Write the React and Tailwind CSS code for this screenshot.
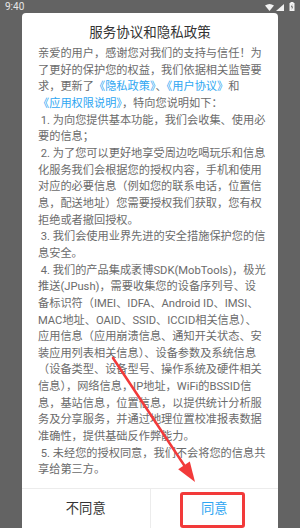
import React from "react";

const B = ({ children }) => <span className="text-[#2ea6f2]">{children}</span>;

const lines = [
  "亲爱的用户，感谢您对我们的支持与信任！为",
  "了更好的保护您的权益，我们依据相关监管要",
  <>求，更新了<B>《隐私政策》</B>、<B>《用户协议》</B>和</>,
  <><B>《应用权限说明》</B>，特向您说明如下：</>,
  " 1. 为向您提供基本功能，我们会收集、使用必",
  "要的信息；",
  " 2. 为了您可以更好地享受周边吃喝玩乐和信息",
  "化服务我们会根据您的授权内容，手机和使用",
  "对应的必要信息（例如您的联系电话，位置信",
  "息，配送地址）您需要授权我们获取，您有权",
  "拒绝或者撤回授权。",
  " 3. 我们会使用业界先进的安全措施保护您的信",
  "息安全。",
  " 4. 我们的产品集成袤博SDK(MobTools)，极光",
  "推送(JPush)，需要收集您的设备序列号、设",
  "备标识符（IMEI、IDFA、Android ID、IMSI、",
  "MAC地址、OAID、SSID、ICCID相关信息）、",
  "应用信息（应用崩溃信息、通知开关状态、安",
  "装应用列表相关信息）、设备参数及系统信息",
  "（设备类型、设备型号、操作系统及硬件相关",
  "信息），网络信息，IP地址，WiFi的BSSID信",
  "息，基站信息，位置信息，以提供统计分析服",
  "务及分享服务，并通过地理位置校准报表数据",
  "准确性，提供基础反作弊能力。",
  " 5. 未经您的授权同意，我们不会将您的信息共",
  "享给第三方。",
];

export default function App() {
  return (
    <div
      className="relative w-[300px] h-[528px] overflow-hidden bg-[#636363] flex flex-col"
      style={{ fontFamily: 'Roboto, "Noto Sans CJK SC", sans-serif' }}
    >
      {/* status bar */}
      <div className="h-[13px] flex items-start justify-between px-[5px] text-[#e6e6e6]">
        <span className="text-[10px] leading-[14px]">9:40</span>
        <div className="flex items-center gap-[2px] pt-[3px]">
          <svg width="9" height="7" viewBox="0 0 9 7">
            <path d="M0 1.5 Q4.5 -1.5 9 1.5 L4.5 7 Z" fill="#f2f2f2" />
          </svg>
          <svg width="8" height="7" viewBox="0 0 8 7">
            <path d="M8 0 L8 7 L0 7 Z" fill="#f2f2f2" />
          </svg>
          <svg width="6" height="9" viewBox="0 0 6 9" className="ml-[3px] -mt-[1px]">
            <rect x="1.5" y="0" width="3" height="1" fill="#f2f2f2" />
            <rect x="0.5" y="1" width="5" height="8" fill="#f2f2f2" />
            <path d="M3.4 2 L1.8 5.3 L3 5.3 L2.6 8 L4.2 4.6 L3 4.6 Z" fill="#636363" />
          </svg>
        </div>
      </div>

      {/* dialog */}
      <div className="mx-[22px] flex-1 bg-white rounded-t-[4px] flex flex-col">
        <div className="pt-[9px] text-center text-[13.5px] leading-[20px] text-[#333333]">
          服务协议和隐私政策
        </div>
        <div className="mt-[4px] px-[16px] pb-[9px] text-[11.2px] leading-[16.65px] text-[#6b6b6b]">
          {lines.map((l, i) => (
            <div key={i} className="whitespace-pre">
              {l}
            </div>
          ))}
        </div>
        <div className="border-t border-[#ececec] flex h-[41px]">
          <div className="flex-1 flex items-center justify-center text-[13.3px] text-[#333333] border-r border-[#ececec]">
            不同意
          </div>
          <div className="flex-1 flex items-center justify-center text-[13.3px] text-[#2ea6f2]">
            同意
          </div>
        </div>
      </div>

      {/* red highlight box */}
      <div className="absolute left-[180px] top-[492px] w-[65px] h-[36px] border-[3px] border-[#f23a3a] rounded-[3px]" />

      {/* red arrow */}
      <svg className="absolute left-0 top-0 pointer-events-none" width="300" height="528" viewBox="0 0 300 528">
        <line x1="113" y1="358" x2="184" y2="465" stroke="#f23a3a" strokeWidth="2.5" strokeLinecap="round" />
        <polygon points="195,482 189.8,461.4 178.2,469.2" fill="#f23a3a" />
      </svg>
    </div>
  );
}
